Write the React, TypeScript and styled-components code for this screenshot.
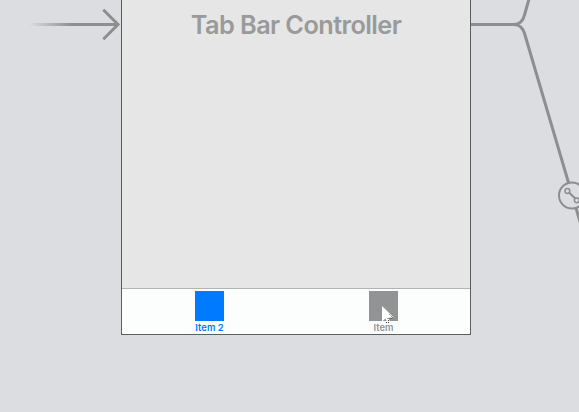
import React from "react";
import styled, { createGlobalStyle } from "styled-components";

const GlobalStyle = createGlobalStyle`
  html, body { margin: 0; padding: 0; overflow: hidden; background: #dcdde0; }
  * { box-sizing: border-box; }
`;

const Canvas = styled.main`
  display: grid;
  grid-template-columns: 121px 350px 1fr;
  align-items: start;
  width: 579px;
  height: 412px;
  overflow: hidden;
  background: #dcdde0;
  font-family: Inter, "Liberation Sans", sans-serif;
`;

const Connector = styled.svg`
  display: block;
`;

const Scene = styled.section`
  display: flex;
  flex-direction: column;
  height: 335px;
  border: 1px solid #5d5e60;
  border-top: 0;
  background: #e6e6e6;
`;

const SceneBody = styled.div`
  flex: 1;
  padding-top: 8px;
`;

const SceneTitle = styled.h1`
  margin: 0;
  color: #999a9a;
  font-size: 25.3px;
  font-weight: 600;
  line-height: 34px;
  letter-spacing: -0.58px;
  text-align: center;
  white-space: nowrap;
`;

const TabBar = styled.nav`
  display: grid;
  grid-template-columns: 1fr 1fr;
  height: 46px;
  border-top: 1px solid #b2b3b4;
  background: #fcfefe;
`;

const Tab = styled.div<{ $selected?: boolean }>`
  position: relative;
  display: flex;
  flex-direction: column;
  align-items: center;
  padding: 2px 0 0 1px;
  color: ${(p) => (p.$selected ? "#007aff" : "#929394")};
`;

const TabIcon = styled.span`
  width: 29.6px;
  height: 30px;
  background: currentColor;
`;

const TabLabel = styled.span`
  font-size: 9.4px;
  font-weight: 600;
  line-height: 13px;
  letter-spacing: 0.05px;
`;

const Pointer = styled.svg`
  position: absolute;
  left: 85px;
  top: 17px;
`;

export default function App() {
  return (
    <>
      <GlobalStyle />
      <Canvas>
        <Connector width="121" height="60" fill="none">
          <defs>
            <linearGradient id="fade" gradientUnits="userSpaceOnUse" x1="29" y1="0" x2="72" y2="0">
              <stop offset="0" stopColor="#8d8e8f" stopOpacity="0" />
              <stop offset="1" stopColor="#8d8e8f" />
            </linearGradient>
          </defs>
          <path d="M29 24.5H118" stroke="url(#fade)" strokeWidth="3" />
          <path d="M103.3 9.8 118 24.5 103.3 39.2" stroke="#8d8e8f" strokeWidth="3" />
        </Connector>
        <Scene>
          <SceneBody>
            <SceneTitle>Tab Bar Controller</SceneTitle>
          </SceneBody>
          <TabBar>
            <Tab $selected>
              <TabIcon />
              <TabLabel>Item 2</TabLabel>
            </Tab>
            <Tab>
              <TabIcon />
              <TabLabel>Item</TabLabel>
              <Pointer width="16" height="20" viewBox="0 0 16 20">
                <path d="M1 0V15.5L4.5 12.5 7 18 9.5 17 7.5 11.8 12.8 11.5Z" fill="#fff" />
                <path d="M8.5 8.5 12.5 12.5M6.5 12.5H11M7 14.5H9M5 16.5H9" stroke="#424344" strokeWidth="1" strokeDasharray="1 1" fill="none" />
              </Pointer>
            </Tab>
          </TabBar>
        </Scene>
        <Connector width="108" height="240" fill="none" stroke="#8d8e8f">
          <path d="M0 24.5H43C48 24.5 52 21 53.5 15L58 -1" strokeWidth="3" />
          <path d="M43 24.5C49 24.5 52 28 53.7 34L110 225" strokeWidth="3" />
          <circle cx="101" cy="195.5" r="13" fill="#dcdde0" strokeWidth="2" />
          <path d="M98 192.5 104.5 198.8" strokeWidth="2" />
          <circle cx="96.4" cy="191" r="2.4" strokeWidth="1.5" />
          <circle cx="105.8" cy="200.3" r="2.4" strokeWidth="1.5" />
        </Connector>
      </Canvas>
    </>
  );
}
